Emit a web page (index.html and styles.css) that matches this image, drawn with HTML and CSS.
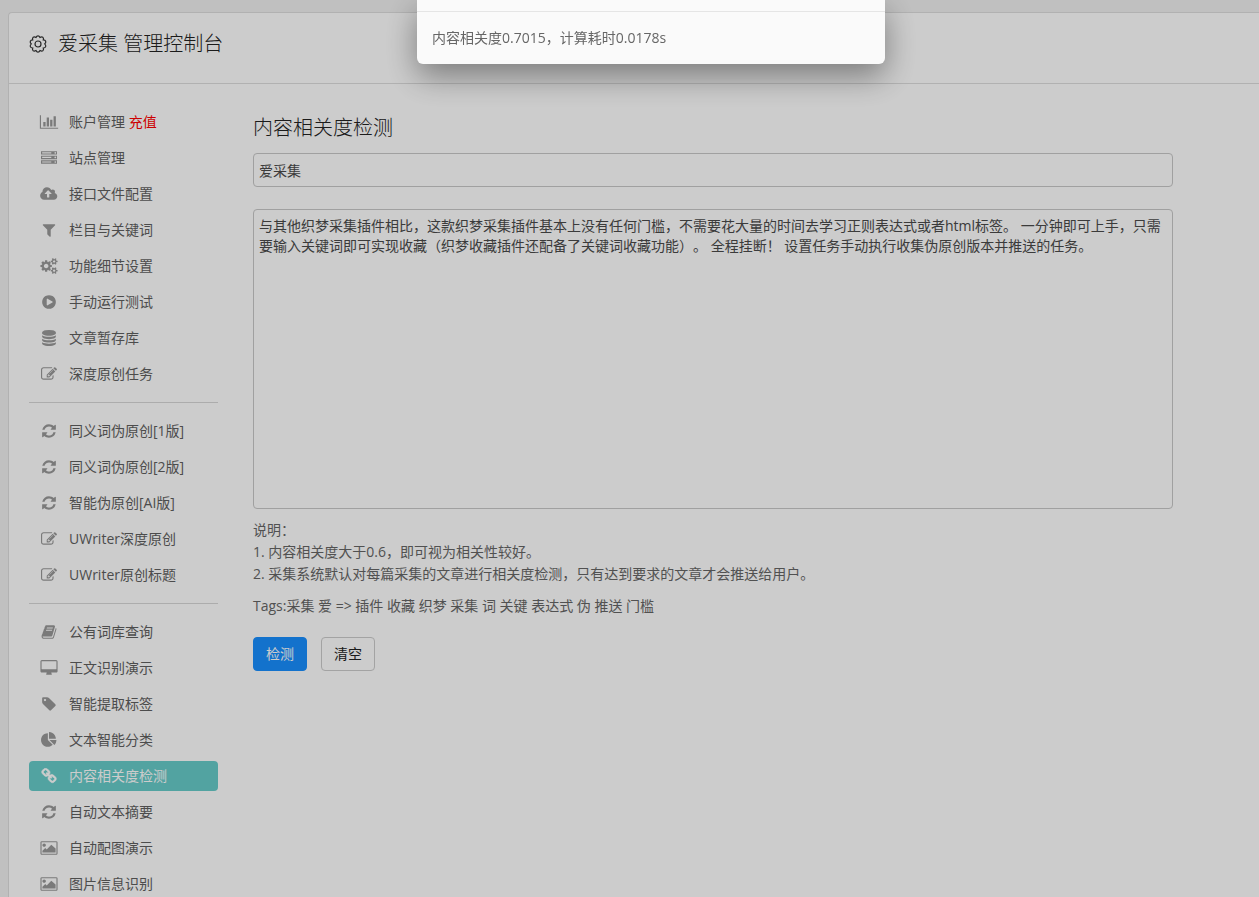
FILE: index.html
```html
<!DOCTYPE html>
<html lang="zh-CN">
<head>
<meta charset="utf-8">
<title>爱采集 管理控制台</title>
<link rel="stylesheet" href="styles.css">
</head>
<body>
<svg class="sprite" aria-hidden="true">
  <symbol id="i-chart" viewBox="0 0 2048 1792"><path d="M640 896v512h-256v-512h256zm384-512v1024h-256v-1024h256zm1024 1152v128h-2048v-1536h128v1408h1920zm-640-896v768h-256v-768h256zm384-384v1152h-256v-1152h256z"/></symbol>
  <symbol id="i-server" viewBox="0 0 1792 1792"><path d="M128 1408h1024v-128h-1024v128zm0-512h1024v-128h-1024v128zm1568 448q0-40-28-68t-68-28-68 28-28 68 28 68 68 28 68-28 28-68zm-1568-960h1024v-128h-1024v128zm1568 448q0-40-28-68t-68-28-68 28-28 68 28 68 68 28 68-28 28-68zm0-512q0-40-28-68t-68-28-68 28-28 68 28 68 68 28 68-28 28-68zm96 832v384h-1792v-384h1792zm0-512v384h-1792v-384h1792zm0-512v384h-1792v-384h1792z"/></symbol>
  <symbol id="i-cloud" viewBox="0 0 1856 1792"><path d="M1216 864q0-14-9-23l-352-352q-9-9-23-9t-23 9l-351 351q-10 12-10 24 0 14 9 23t23 9h224v352q0 13 9.500 22.500t22.500 9.500h192q13 0 22.500-9.500t9.500-22.500v-352h224q13 0 22.500-9.500t9.500-22.500zm640 288q0 159-112.500 271.500t-271.500 112.500h-1088q-185 0-316.500-131.500t-131.500-316.500q0-130 70-240t188-165q-2-30-2-43 0-212 150-362t362-150q156 0 285.500 87t188.500 231q71-62 166-62 106 0 181 75t75 181q0 76-41 138 130 31 213.500 135.500t83.500 238.500z"/></symbol>
  <symbol id="i-filter" viewBox="0 0 1792 1792"><path d="M1595 295q17 41-14 70l-493 493v742q0 42-39 59-13 5-25 5-27 0-45-19l-256-256q-19-19-19-45v-486l-493-493q-31-29-14-70 17-39 59-39h1280q42 0 59 39z"/></symbol>
  <symbol id="i-cogs" viewBox="0 0 1920 1792"><path d="M896 896q0-106-75-181t-181-75-181 75-75 181 75 181 181 75 181-75 75-181zm768 512q0-52-38-90t-90-38-90 38-38 90q0 53 37.500 90.500t90.500 37.500 90.500-37.500 37.500-90.500zm0-1024q0-52-38-90t-90-38-90 38-38 90q0 53 37.500 90.500t90.500 37.500 90.500-37.500 37.500-90.500zm-384 421v185q0 10-7 19.500t-16 10.500l-155 24q-11 35-32 76 34 48 90 115 7 11 7 20 0 12-7 19-23 30-82.500 89.500t-78.500 59.500q-11 0-21-7l-115-90q-37 19-77 31-11 108-23 155-7 24-30 24h-186q-11 0-20-7.500t-10-17.500l-23-153q-34-10-75-31l-118 89q-7 7-20 7-11 0-21-8-144-133-144-160 0-9 7-19 10-14 41-53t47-61q-23-44-35-82l-152-24q-10-1-17-9.500t-7-19.500v-185q0-10 7-19.500t16-10.500l155-24q11-35 32-76-34-48-90-115-7-11-7-20 0-12 7-20 22-30 82-89t79-59q11 0 21 7l115 90q34-18 77-32 11-108 23-154 7-24 30-24h186q11 0 20 7.500t10 17.500l23 153q34 10 75 31l118-89q8-7 20-7 11 0 21 8 144 133 144 160 0 8-7 19-12 16-42 54t-45 60q23 48 34 82l152 23q10 2 17 10.500t7 19.500zm640 533v140q0 16-149 31-12 27-30 52 51 113 51 138 0 4-4 7-122 71-124 71-8 0-46-47t-52-68q-20 2-30 2t-30-2q-14 21-52 68t-46 47q-2 0-124-71-4-3-4-7 0-25 51-138-18-25-30-52-149-15-149-31v-140q0-16 149-31 13-29 30-52-51-113-51-138 0-4 4-7 4-2 35-20t59-34 30-16q8 0 46 46.500t52 67.500q20-2 30-2t30 2q51-71 92-112l6-2q4 0 124 70 4 3 4 7 0 25-51 138 17 23 30 52 149 15 149 31zm0-1024v140q0 16-149 31-12 27-30 52 51 113 51 138 0 4-4 7-122 71-124 71-8 0-46-47t-52-68q-20 2-30 2t-30-2q-14 21-52 68t-46 47q-2 0-124-71-4-3-4-7 0-25 51-138-18-25-30-52-149-15-149-31v-140q0-16 149-31 13-29 30-52-51-113-51-138 0-4 4-7 4-2 35-20t59-34 30-16q8 0 46 46.500t52 67.500q20-2 30-2t30 2q51-71 92-112l6-2q4 0 124 70 4 3 4 7 0 25-51 138 17 23 30 52 149 15 149 31z"/></symbol>
  <symbol id="i-play" viewBox="0 0 1792 1792"><path d="M896 128q209 0 385.500 103t279.500 279.500 103 385.500-103 385.500-279.500 279.500-385.500 103-385.500-103-279.500-279.500-103-385.500 103-385.500 279.500-279.500 385.500-103zm384 823q32-18 32-55t-32-55l-544-320q-31-19-64-1-32 19-32 56v640q0 37 32 56 16 8 32 8 17 0 32-9z"/></symbol>
  <symbol id="i-database" viewBox="0 0 1792 1792"><path d="M896 768q237 0 443-43t325-127v170q0 69-103 128t-280 93.500-385 34.500-385-34.500-280-93.500-103-128v-170q119 84 325 127t443 43zm0 768q237 0 443-43t325-127v170q0 69-103 128t-280 93.500-385 34.500-385-34.500-280-93.500-103-128v-170q119 84 325 127t443 43zm0-384q237 0 443-43t325-127v170q0 69-103 128t-280 93.500-385 34.500-385-34.500-280-93.500-103-128v-170q119 84 325 127t443 43zm0-1152q208 0 385 34.500t280 93.500 103 128v128q0 69-103 128t-280 93.500-385 34.500-385-34.500-280-93.500-103-128v-128q0-69 103-128t280-93.500 385-34.500z"/></symbol>
  <symbol id="i-edit" viewBox="0 0 1792 1792"><path d="M888 1184l116-116-152-152-116 116v56h96v96h56zm440-720q-16-16-33 1l-350 350q-17 17-1 33t33-1l350-350q17-17 1-33zm80 594v190q0 119-84.500 203.500t-203.500 84.500h-832q-119 0-203.500-84.500t-84.500-203.500v-832q0-119 84.500-203.500t203.500-84.500h832q63 0 117 25 15 7 18 23 3 17-9 29l-49 49q-14 14-32 8-23-6-45-6h-832q-66 0-113 47t-47 113v832q0 66 47 113t113 47h832q66 0 113-47t47-113v-126q0-13 9-22l64-64q15-15 35-7t20 29zm-96-738l288 288-672 672h-288v-288zm444 132l-92 92-288-288 92-92q28-28 68-28t68 28l152 152q28 28 28 68t-28 68z"/></symbol>
  <symbol id="i-refresh" viewBox="0 0 1792 1792"><path d="M1639 1056q0 5-1 7-64 268-268 434.500t-478 166.500q-146 0-282.500-55t-243.500-157l-129 129q-19 19-45 19t-45-19-19-45v-448q0-26 19-45t45-19h448q26 0 45 19t19 45-19 45l-137 137q71 66 161 102t187 36q134 0 250-65t186-179q11-17 53-117 8-23 30-23h192q13 0 22.500 9.500t9.500 22.500zm25-800v448q0 26-19 45t-45 19h-448q-26 0-45-19t-19-45 19-45l138-138q-148-137-349-137-134 0-250 65t-186 179q-11 17-53 117-8 23-30 23h-199q-13 0-22.500-9.500t-9.500-22.500v-7q65-268 270-434.500t480-166.500q146 0 284 55.500t245 156.500l130-129q19-19 45-19t45 19 19 45z"/></symbol>
  <symbol id="i-book" viewBox="0 0 1792 1792"><path d="M1703 478q40 57 18 129l-275 906q-19 64-76.500 107.500t-122.500 43.500h-923q-77 0-148.500-53.500t-99.500-131.500q-24-67-2-127 0-4 3-27t4-37q1-8-3-21.500t-3-19.500q2-11 8-21t16.500-23.500 16.500-23.500q23-38 45-91.500t30-91.500q3-10 .5-30t-.5-28q3-11 17-28t17-23q21-36 42-92t25-90q1-9-2.500-32t.5-28q4-13 22-30.500t22-22.500q19-26 42.500-84.500t27.500-96.500q1-8-3-25.500t-2-26.500q2-8 9-18t18-23 17-21q8-12 16.500-30.500t15-35 16-36 19.500-32 26.500-23.500 36-11.500 47.500 5.500l-1 3q38-9 51-9h761q74 0 114 56t18 130l-274 906q-36 119-71.500 153.500t-128.500 34.500h-869q-27 0-38 15-11 16-1 43 24 70 144 70h923q29 0 56-15.500t35-41.500l300-987q7-22 5-57 38 15 59 43zm-1064 2q-4 13 2 22.500t20 9.500h608q13 0 25.500-9.500t16.500-22.500l21-64q4-13-2-22.500t-20-9.500h-608q-13 0-25.500 9.500t-16.500 22.500zm-83 256q-4 13 2 22.500t20 9.500h608q13 0 25.500-9.500t16.500-22.500l21-64q4-13-2-22.500t-20-9.500h-608q-13 0-25.500 9.500t-16.500 22.500z"/></symbol>
  <symbol id="i-desktop" viewBox="0 0 1920 1792"><path d="M1792 992v-832q0-13-9.500-22.500t-22.500-9.500h-1600q-13 0-22.500 9.500t-9.500 22.500v832q0 13 9.500 22.500t22.500 9.500h1600q13 0 22.500-9.500t9.500-22.500zm128-832v1088q0 66-47 113t-113 47h-544q0 37 16 77.500t32 71 16 43.500q0 26-19 45t-45 19h-512q-26 0-45-19t-19-45q0-14 16-44t32-70 16-78h-544q-66 0-113-47t-47-113v-1088q0-66 47-113t113-47h1600q66 0 113 47t47 113z"/></symbol>
  <symbol id="i-tag" viewBox="0 0 1792 1792"><path d="M576 448q0-53-37.500-90.500t-90.500-37.500-90.500 37.500-37.500 90.500 37.500 90.500 90.500 37.500 90.500-37.500 37.500-90.500zm1067 576q0 53-37 90l-491 492q-39 37-91 37-53 0-90-37l-715-716q-38-37-64.500-101t-26.500-117v-416q0-52 38-90t90-38h416q53 0 117 26.500t102 64.500l715 714q37 39 37 91z"/></symbol>
  <symbol id="i-pie" viewBox="0 0 1792 1792"><path d="M768 890l546 546q-106 108-247.500 168t-298.500 60q-209 0-385.500-103t-279.500-279.500-103-385.500 103-385.500 279.500-279.500 385.500-103v762zm187 6h773q0 157-60 298.500t-168 247.500zm709-128h-768v-768q209 0 385.500 103t279.500 279.500 103 385.500z"/></symbol>
  <symbol id="i-link" viewBox="0 0 1792 1792"><path d="M1520 1216q0-40-28-68l-208-208q-28-28-68-28-42 0-72 32 3 3 19 18.500t21.500 21.500 15 19 13 25.500 3.500 27.500q0 40-28 68t-68 28q-15 0-27.500-3.500t-25.500-13-19-15-21.500-21.500-18.500-19q-33 31-33 73 0 40 28 68l206 207q27 27 68 27 40 0 68-26l147-146q28-28 28-67zm-703-705q0-40-28-68l-206-207q-28-28-68-28-39 0-68 27l-147 146q-28 28-28 67 0 40 28 68l208 208q27 27 68 27 42 0 72-31-3-3-19-18.500t-21.500-21.500-15-19-13-25.500-3.500-27.500q0-40 28-68t68-28q15 0 27.500 3.500t25.500 13 19 15 21.500 21.500 18.500 19q33-31 33-73zm895 705q0 120-85 203l-147 146q-83 83-203 83-121 0-204-85l-206-207q-83-83-83-203 0-123 88-209l-88-88q-86 88-208 88-120 0-204-84l-208-208q-84-84-84-204t85-203l147-146q83-83 203-83 121 0 204 85l206 207q83 83 83 203 0 123-88 209l88 88q86-88 208-88 120 0 204 84l208 208q84 84 84 204z"/></symbol>
  <symbol id="i-image" viewBox="0 0 1920 1792"><path d="M608 576q0 80-56 136t-136 56-136-56-56-136 56-136 136-56 136 56 56 136zm1088 384v448h-1472v-192l320-320 160 160 512-512zm96-704h-1664v1280h1664zm128 32v1216q0 66-47 113t-113 47h-1600q-66 0-113-47t-47-113v-1216q0-66 47-113t113-47h1600q66 0 113 47t47 113z" fill-rule="evenodd"/></symbol>
</svg>

<main class="card">
  <header class="card-header">
    <svg class="gear" viewBox="0 0 18 18" aria-hidden="true"><path d="M9 .8Q10.300 .8 11 2.500Q12.700 1.500 13.800 2.300Q14.900 3.200 14.300 4.900Q16.200 5 16.700 6.300Q17.100 7.700 15.700 8.900Q17.100 10.300 16.700 11.600Q16.200 12.900 14.300 13Q14.900 14.800 13.800 15.700Q12.700 16.500 11 15.500Q10.300 17.200 9 17.200Q7.700 17.200 7 15.500Q5.300 16.500 4.200 15.700Q3.100 14.800 3.700 13Q1.800 12.900 1.300 11.600Q.9 10.300 2.300 8.900Q.9 7.700 1.300 6.300Q1.800 5 3.700 4.900Q3.100 3.200 4.200 2.300Q5.300 1.500 7 2.500Q7.700 .8 9 .8Z"/><circle cx="9" cy="9" r="3"/></svg>
    <h1 class="title">爱采集 管理控制台</h1>
  </header>
  <div class="layout">
    <nav class="sidebar">
      <a class="item" href="#"><svg class="icon"><use href="#i-chart"/></svg><span>账户管理 <span class="hot">充值</span></span></a>
      <a class="item" href="#"><svg class="icon"><use href="#i-server"/></svg>站点管理</a>
      <a class="item" href="#"><svg class="icon"><use href="#i-cloud"/></svg>接口文件配置</a>
      <a class="item" href="#"><svg class="icon"><use href="#i-filter"/></svg>栏目与关键词</a>
      <a class="item" href="#"><svg class="icon"><use href="#i-cogs"/></svg>功能细节设置</a>
      <a class="item" href="#"><svg class="icon"><use href="#i-play"/></svg>手动运行测试</a>
      <a class="item" href="#"><svg class="icon"><use href="#i-database"/></svg>文章暂存库</a>
      <a class="item" href="#"><svg class="icon"><use href="#i-edit"/></svg>深度原创任务</a>
      <hr class="divider">
      <a class="item" href="#"><svg class="icon"><use href="#i-refresh"/></svg>同义词伪原创[1版]</a>
      <a class="item" href="#"><svg class="icon"><use href="#i-refresh"/></svg>同义词伪原创[2版]</a>
      <a class="item" href="#"><svg class="icon"><use href="#i-refresh"/></svg>智能伪原创[AI版]</a>
      <a class="item" href="#"><svg class="icon"><use href="#i-edit"/></svg>UWriter深度原创</a>
      <a class="item" href="#"><svg class="icon"><use href="#i-edit"/></svg>UWriter原创标题</a>
      <hr class="divider">
      <a class="item" href="#"><svg class="icon"><use href="#i-book"/></svg>公有词库查询</a>
      <a class="item" href="#"><svg class="icon"><use href="#i-desktop"/></svg>正文识别演示</a>
      <a class="item" href="#"><svg class="icon"><use href="#i-tag"/></svg>智能提取标签</a>
      <a class="item" href="#"><svg class="icon"><use href="#i-pie"/></svg>文本智能分类</a>
      <a class="item active" href="#" aria-current="page"><svg class="icon"><use href="#i-link"/></svg>内容相关度检测</a>
      <a class="item" href="#"><svg class="icon"><use href="#i-refresh"/></svg>自动文本摘要</a>
      <a class="item" href="#"><svg class="icon"><use href="#i-image"/></svg>自动配图演示</a>
      <a class="item" href="#"><svg class="icon"><use href="#i-image"/></svg>图片信息识别</a>
    </nav>
    <form class="content">
      <h2 class="title">内容相关度检测</h2>
      <input class="field keyword" type="text" aria-label="关键词" value="爱采集">
      <textarea class="field article" aria-label="文章内容" spellcheck="false">与其他织梦采集插件相比，这款织梦采集插件基本上没有任何门槛，不需要花大量的时间去学习正则表达式或者html标签。 一分钟即可上手，只需要输入关键词即可实现收藏（织梦收藏插件还配备了关键词收藏功能）。 全程挂断！ 设置任务手动执行收集伪原创版本并推送的任务。</textarea>
      <p class="note">说明：<br>1. 内容相关度大于0.6，即可视为相关性较好。<br>2. 采集系统默认对每篇采集的文章进行相关度检测，只有达到要求的文章才会推送给用户。</p>
      <p class="note">Tags:采集 爱 =&gt; 插件 收藏 织梦 采集 词 关键 表达式 伪 推送 门槛</p>
      <div class="actions">
        <button class="btn primary" type="button">检测</button>
        <button class="btn" type="button">清空</button>
      </div>
    </form>
  </div>
</main>

<div class="overlay">
  <div class="dialog" role="dialog" aria-label="检测结果">
    <div class="dialog-top"></div>
    <p class="dialog-text">内容相关度0.7015，计算耗时0.0178s</p>
  </div>
</div>
</body>
</html>
```

FILE: styles.css
```css
* {
  box-sizing: border-box;
}

body {
  margin: 0;
  padding: 12px 0 0 8px;
  height: 100vh;
  overflow: hidden;
  background: #f0f0f0;
  color: #666;
  font: 14px/22px "Open Sans", "Noto Sans CJK SC", sans-serif;
  text-spacing-trim: space-all;
}

.sprite {
  position: absolute;
  width: 0;
  height: 0;
}

.card {
  min-height: 100%;
  background: #fff;
  border: 1px solid #dedede;
  border-width: 1px 0 0 1px;
  border-radius: 4px 0 0 0;
}

.card-header {
  display: flex;
  align-items: center;
  gap: 11px;
  height: 71px;
  padding: 0 20px 8px;
  border-bottom: 1px solid #dedede;
}

.gear {
  width: 18px;
  height: 18px;
  fill: none;
  stroke: #333;
  stroke-width: 1.2;
}

.title {
  margin: 0;
  color: #222;
  font-size: 20px;
  line-height: 28px;
  font-weight: 300;
}

.layout {
  display: flex;
  gap: 35px;
  padding: 23px 20px 20px;
}

.sidebar {
  display: flex;
  flex-direction: column;
  flex: 0 0 189px;
  gap: 6px;
}

.item {
  display: flex;
  align-items: center;
  gap: 10px;
  height: 30px;
  padding: 0 10px;
  border-radius: 4px;
  color: #606060;
  text-decoration: none;
}

.icon {
  flex: none;
  width: 20px;
  height: 16px;
  fill: #999;
}

.hot {
  color: #f00;
}

.active {
  background: #67ccca;
  color: #fff;
}

.active .icon {
  fill: #fff;
  stroke: #fff;
  stroke-width: 70;
}

.divider {
  width: 100%;
  margin: 7px 0;
  border: 0;
  border-top: 1px solid #d8d8d8;
}

.content {
  display: flex;
  flex-direction: column;
  flex: 0 1 920px;
  padding-top: 7px;
}

.field {
  width: 100%;
  padding: 6px 5px;
  border: 1px solid #c8c8c8;
  border-radius: 4px;
  background: #fff;
  color: #4a4a4a;
  font: inherit;
  line-height: 20px;
  text-spacing-trim: inherit;
}

.keyword {
  height: 34px;
  margin: 11px 0 22px;
}

.article {
  height: 300px;
  resize: none;
}

.note {
  margin: 10px 0 0;
}

.actions {
  display: flex;
  gap: 14px;
  margin-top: 20px;
}

.btn {
  height: 34px;
  padding: 0 12px;
  border: 1px solid #ccc;
  border-radius: 4px;
  background: #fff;
  color: #222;
  font: inherit;
}

.primary {
  border-color: #188fff;
  background: #188fff;
  color: #fff;
}

.overlay {
  position: fixed;
  inset: 0;
  display: flex;
  align-items: flex-start;
  justify-content: center;
  padding-left: 43px;
  background: rgba(0, 0, 0, 0.2);
}

.dialog {
  width: 468px;
  border-radius: 0 0 6px 6px;
  background: #fafafa;
  box-shadow: 0 12px 32px rgba(0, 0, 0, 0.4);
}

.dialog-top {
  height: 12px;
  border-bottom: 1px solid #e5e5e5;
}

.dialog-text {
  margin: 0;
  padding: 15px;
}
```
